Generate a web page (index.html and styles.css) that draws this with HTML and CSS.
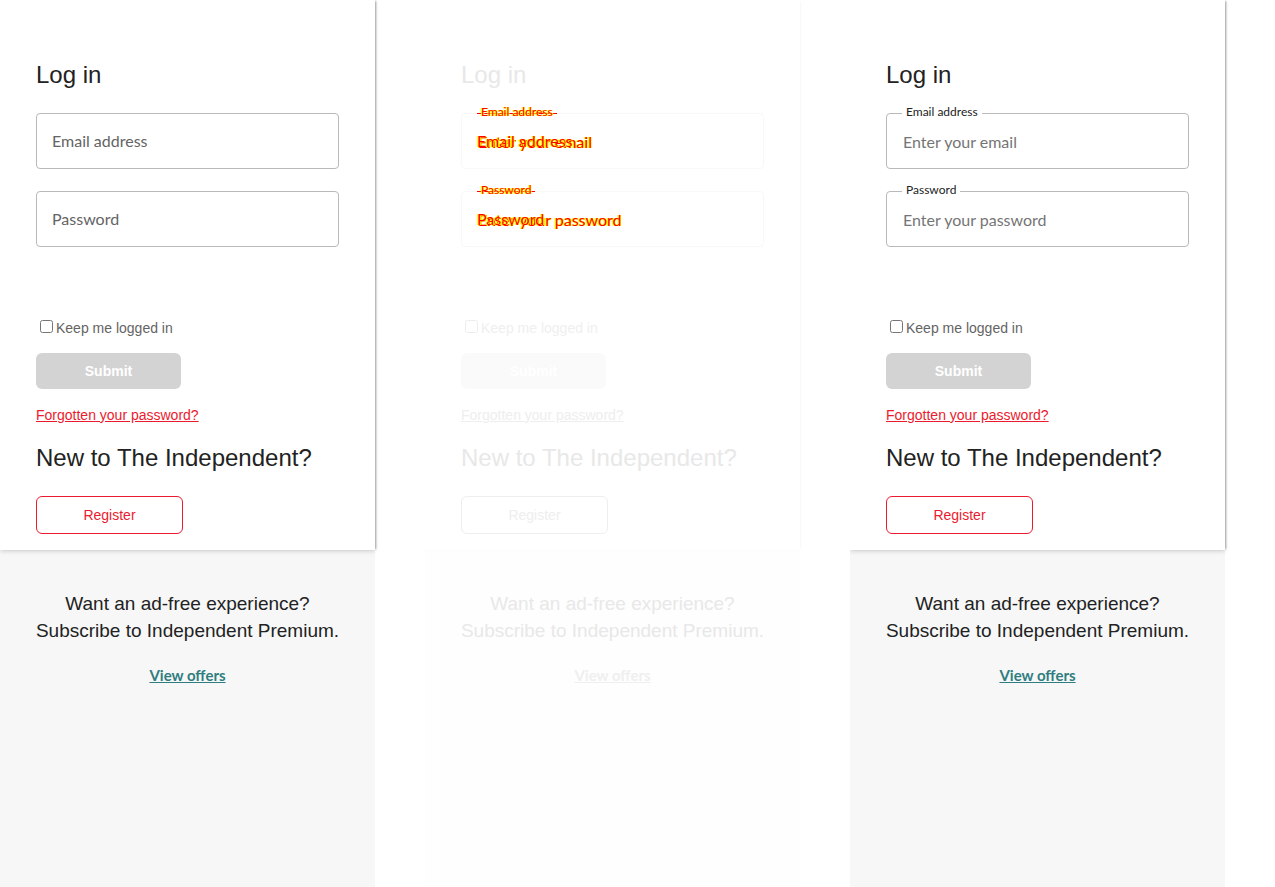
FILE: index.html
```html
<!DOCTYPE html>
<html lang="en">
<head>
<meta charset="utf-8">
<title>Log in</title>
<link rel="stylesheet" href="styles.css">
</head>
<body>
<main class="board">
  <section class="panel">
    <form class="card">
      <h1 class="title">Log in</h1>
      <div class="field"><input class="input" id="email-a" type="email"><label class="label label-inside" for="email-a">Email address</label></div>
      <div class="field"><input class="input" id="pass-a" type="password"><label class="label label-inside" for="pass-a">Password</label></div>
      <div class="keep"><input class="tick" id="keep-a" type="checkbox"><label for="keep-a">Keep me logged in</label></div>
      <button class="submit" type="submit" disabled>Submit</button>
      <a class="forgot" href="#">Forgotten your password?</a>
      <h2 class="title">New to The Independent?</h2>
      <button class="register" type="button">Register</button>
    </form>
    <aside class="promo">
      <p class="pitch">Want an ad-free experience?<br>Subscribe to Independent Premium.</p>
      <a class="offers" href="#">View offers</a>
    </aside>
  </section>
  <section class="panel diff">
    <form class="card">
      <h1 class="title">Log in</h1>
      <div class="field"><input class="input" id="email-b" type="email" placeholder="Enter your email"><label class="label label-top" for="email-b">Email address</label><span class="label label-inside">Email address</span></div>
      <div class="field"><input class="input" id="pass-b" type="password" placeholder="Enter your password"><label class="label label-top" for="pass-b">Password</label><span class="label label-inside">Password</span></div>
      <div class="keep"><input class="tick" id="keep-b" type="checkbox"><label for="keep-b">Keep me logged in</label></div>
      <button class="submit" type="submit" disabled>Submit</button>
      <a class="forgot" href="#">Forgotten your password?</a>
      <h2 class="title">New to The Independent?</h2>
      <button class="register" type="button">Register</button>
    </form>
    <aside class="promo">
      <p class="pitch">Want an ad-free experience?<br>Subscribe to Independent Premium.</p>
      <a class="offers" href="#">View offers</a>
    </aside>
  </section>
  <section class="panel">
    <form class="card">
      <h1 class="title">Log in</h1>
      <div class="field"><input class="input" id="email-c" type="email" placeholder="Enter your email"><label class="label label-top" for="email-c">Email address</label></div>
      <div class="field"><input class="input" id="pass-c" type="password" placeholder="Enter your password"><label class="label label-top" for="pass-c">Password</label></div>
      <div class="keep"><input class="tick" id="keep-c" type="checkbox"><label for="keep-c">Keep me logged in</label></div>
      <button class="submit" type="submit" disabled>Submit</button>
      <a class="forgot" href="#">Forgotten your password?</a>
      <h2 class="title">New to The Independent?</h2>
      <button class="register" type="button">Register</button>
    </form>
    <aside class="promo">
      <p class="pitch">Want an ad-free experience?<br>Subscribe to Independent Premium.</p>
      <a class="offers" href="#">View offers</a>
    </aside>
  </section>
</main>
</body>
</html>
```
FILE: styles.css
```css
* { box-sizing: border-box; }
body {
  margin: 0;
  background: #fff;
  font-family: "Liberation Sans", Arial, sans-serif;
  font-size: 14px;
}
.board {
  display: grid;
  grid-template-columns: repeat(3, 1fr);
  min-height: 100vh;
}
.panel {
  --ink: #222;
  --muted: #646464;
  --hint: #757575;
  --line: #b9b9b9;
  --fill: #d3d3d3;
  --accent: #ec1a2e;
  --teal: #2f7d80;
  --ground: #f7f7f7;
  --shade: rgba(0, 0, 0, 0.35);
  --shade-low: rgba(0, 0, 0, 0.12);
  display: flex;
  flex-direction: column;
  padding-right: 50px;
  color: var(--ink);
}
.diff {
  --ink: #e8e8e8;
  --muted: #efefef;
  --line: #f8f8f8;
  --fill: #fafafa;
  --accent: #eee;
  --teal: #efefef;
  --ground: #fefefe;
  --shade: rgba(0, 0, 0, 0.03);
  --shade-low: rgba(0, 0, 0, 0.01);
}
.card {
  position: relative;
  display: flex;
  flex-direction: column;
  align-items: flex-start;
  padding: 59px 36px 16px;
  background: #fff;
  box-shadow: 2px 0 2px -1px var(--shade), 0 2px 4px var(--shade-low);
  clip-path: inset(0 -8px -8px 0);
}
.title {
  margin: 0;
  font-size: 24px;
  font-weight: 400;
  line-height: 32px;
}
.field {
  position: relative;
  width: 100%;
  margin-top: 22px;
}
.input {
  display: block;
  width: 100%;
  height: 56px;
  padding: 0 16px;
  border: 1px solid var(--line);
  border-radius: 4px;
  background: transparent;
  font: 16px Lato, sans-serif;
}
.input::placeholder { color: var(--hint); opacity: 1; }
.label { position: absolute; font-family: Lato, sans-serif; }
.label-inside {
  top: 18px;
  left: 16px;
  color: var(--muted);
  font-size: 16px;
  line-height: 20px;
}
.label-top {
  top: -9px;
  left: 16px;
  padding: 0 4px;
  background: #fff;
  font-size: 12px;
  line-height: 16px;
}
.diff .input::placeholder,
.diff .label {
  color: #f00;
  text-shadow: 1px 0 #ff0, -1px 0 #ff0;
}
.diff .label-top {
  background: linear-gradient(#f00, #f00) 0 9px / 100% 1px no-repeat;
}
.keep {
  display: flex;
  align-items: center;
  margin-top: 71px;
  color: var(--muted);
  line-height: 20px;
}
.tick { margin: 0 3px 3px 4px; }
.diff .tick { opacity: 0.12; }
.submit,
.register {
  border-radius: 6px;
  font: 14px "Liberation Sans", Arial, sans-serif;
}
.submit {
  width: 145px;
  height: 36px;
  margin-top: 15px;
  border: 0;
  background: var(--fill);
  color: #fff;
  font-weight: 700;
}
.forgot {
  margin: 16px 0 17px;
  color: var(--accent);
  line-height: 20px;
}
.register {
  width: 147px;
  height: 38px;
  margin-top: 22px;
  border: 1px solid var(--accent);
  background: #fff;
  color: var(--accent);
}
.promo {
  display: flex;
  flex: 1;
  flex-direction: column;
  align-items: center;
  padding-top: 40px;
  background: var(--ground);
  text-align: center;
}
.pitch {
  margin: 0 0 21px;
  font-size: 19px;
  line-height: 27px;
}
.offers {
  color: var(--teal);
  font: 700 15px/20px Lato, sans-serif;
}
```
